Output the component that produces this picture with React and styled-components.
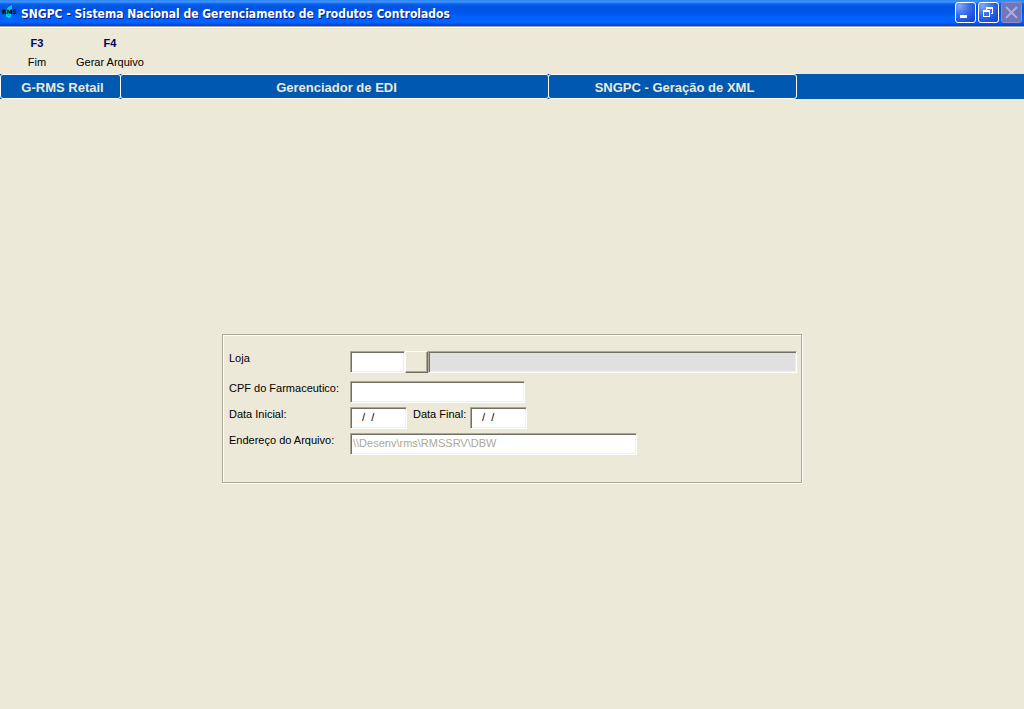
import styled, { createGlobalStyle, css } from 'styled-components'

const GlobalStyle = createGlobalStyle`
    * {
        box-sizing: border-box;
    }

    body {
        margin: 0;
        background-color: #ece9d8;
        color: #000000;
        font-family: 'Liberation Sans', Arial, sans-serif;
        font-size: 11px;
        line-height: 14px;
    }

    button,
    input {
        margin: 0;
        font: inherit;
    }
`

const Window = styled.div`
    display: flex;
    flex-direction: column;
    min-height: 100vh;
`

const TitleBar = styled.header`
    display: flex;
    align-items: center;
    gap: 3px;
    height: 28px;
    padding: 0 2px 2px;
    border-bottom: 1px solid #ffffff;
    background: linear-gradient(
        to bottom,
        #2f86f5 0px,
        #3d95ff 2px,
        #0a5fe8 4px,
        #0054e3 7px,
        #0055e8 12px,
        #0061fb 17px,
        #0066ff 22px,
        #0050ee 24px,
        #003dd7 26px,
        #aca899 26px
    );
`

const Title = styled.h1`
    flex: 1;
    margin: 0;
    padding-top: 2px;
    color: #ffffff;
    font-family: 'DejaVu Sans Condensed', 'DejaVu Sans', sans-serif;
    font-size: 12px;
    font-weight: 700;
    line-height: 18px;
    text-shadow: 1px 1px 0 #0a1883;
    white-space: nowrap;
`

const WindowButtons = styled.div`
    display: flex;
    gap: 2px;
`

const WindowButton = styled.button`
    display: flex;
    width: 21px;
    height: 21px;
    padding: 0;
    border: 1px solid #ffffff;
    border-radius: 3px;
    background: radial-gradient(circle at 20% 15%, #82a8fa 0%, #3a70ea 40%, #1c4fdc 75%, #1241c4 100%);

    &:disabled {
        border-color: #8a8ecb;
        background: #7076b8;
    }
`

const Toolbar = styled.div`
    display: flex;
    gap: 12px;
    height: 46px;
    padding: 7px 4px 0 10px;
`

const ToolButton = styled.button`
    display: flex;
    flex-direction: column;
    align-items: center;
    gap: 5px;
    min-width: 54px;
    height: 34px;
    padding: 1px 0;
    border: 0;
    background: none;
    color: #000000;
    line-height: 14px;
`

const ShortcutKey = styled.strong`
    color: #000066;
`

const Path = styled.nav`
    display: flex;
    height: 25px;
    background-color: #0058b0;
`

const PathItem = styled.a`
    flex: 0 1 ${({ $width }) => $width}px;
    margin-right: -1px;
    padding-left: 4px;
    border: 1px solid #ffffff;
    border-radius: 3px;
    color: #ece9d8;
    font-size: 13px;
    font-weight: 700;
    line-height: 25px;
    text-align: center;
    text-decoration: none;
    white-space: nowrap;
`

const Main = styled.main`
    display: flex;
    flex: 1;
    align-items: center;
    justify-content: center;
    padding-top: 9px;
`

const Panel = styled.form`
    display: flex;
    flex-direction: column;
    gap: 4px;
    width: 100%;
    max-width: 580px;
    padding: 16px 4px 27px 6px;
    border: 1px solid #aca899;
    box-shadow: 1px 1px 0 #ffffff, inset 1px 1px 0 #ffffff;
`

const Row = styled.div`
    display: flex;
    margin-bottom: ${({ $spaced }) => ($spaced ? '4px' : '0')};
`

const Label = styled.label`
    flex: none;
    width: 121px;
`

const InlineLabel = styled.label`
    width: 63px;
    padding-left: 6px;
`

const sunken = css`
    border: 1px solid;
    border-color: #aca899 #ffffff #ffffff #aca899;
    box-shadow: inset 1px 1px 0 #716f64, inset -1px -1px 0 #f1efe2;
`

const Field = styled.input`
    ${sunken}
    flex: ${({ $width }) => ($width ? `0 1 ${$width}px` : '1')};
    min-width: 0;
    height: 22px;
    padding: 0 2px 2px;
    border-radius: 0;
    background-color: #ffffff;
    color: #000000;
    outline: 0;

    &:read-only {
        background-color: #e0e0e0;
    }

    &:disabled {
        background-color: #ffffff;
        color: #aca899;
    }
`

const DateField = styled(Field)`
    padding-left: 11px;
    white-space: pre;
`

const SearchButton = styled.button`
    width: 23px;
    height: 22px;
    padding: 0;
    border: 1px solid;
    border-color: #ffffff #716f64 #716f64 #ffffff;
    background-color: #ece9d8;
    box-shadow: inset -1px -1px 0 #aca899;
`

const Logo = () => (
    <svg width="16" height="18" viewBox="0 0 16 18" aria-hidden="true">
        <path d="M7 2h2V1h1v4H9v2H8v2H7v2H6v2H4v-3H3V8h1V6h1V4h1V3h1z" fill="#00c8e8" />
        <path d="M7 10h2v3H8v1H6v-2h1z" fill="#00d8d8" />
        <text x="0" y="10" fontFamily="DejaVu Sans" fontSize="6" fontWeight="700" fill="#000000">
            RMS
        </text>
    </svg>
)

const MinimizeIcon = () => (
    <svg width="19" height="19" viewBox="0 0 19 19" aria-hidden="true">
        <path d="M4 12h7v3H4z" fill="#ffffff" />
    </svg>
)

const RestoreIcon = () => (
    <svg width="19" height="19" viewBox="0 0 19 19" fill="#ffffff" aria-hidden="true">
        <path d="M7 4h7v7h-2v-1h1V6H8v1H7z" />
        <path fillRule="evenodd" d="M4 7h7v7H4zM5 9v4h5V9z" />
    </svg>
)

const CloseIcon = () => (
    <svg width="19" height="19" viewBox="0 0 19 19" aria-hidden="true">
        <path d="M4 4l11 11M15 4L4 15" stroke="#a9aee0" strokeWidth="2" />
    </svg>
)

const shortcuts = [
    { key: 'F3', label: 'Fim' },
    { key: 'F4', label: 'Gerar Arquivo' },
]

const path = [
    { label: 'G-RMS Retail', width: 121 },
    { label: 'Gerenciador de EDI', width: 429 },
    { label: 'SNGPC - Geração de XML', width: 249 },
]

export default function App() {
    return (
        <Window>
            <GlobalStyle />

            <TitleBar>
                <Logo />
                <Title>SNGPC - Sistema Nacional de Gerenciamento de Produtos Controlados</Title>
                <WindowButtons>
                    <WindowButton type="button" aria-label="Minimizar">
                        <MinimizeIcon />
                    </WindowButton>
                    <WindowButton type="button" aria-label="Restaurar">
                        <RestoreIcon />
                    </WindowButton>
                    <WindowButton type="button" aria-label="Fechar" disabled>
                        <CloseIcon />
                    </WindowButton>
                </WindowButtons>
            </TitleBar>

            <Toolbar>
                {shortcuts.map(({ key, label }) => (
                    <ToolButton key={key} type="button">
                        <ShortcutKey>{key}</ShortcutKey>
                        <span>{label}</span>
                    </ToolButton>
                ))}
            </Toolbar>

            <Path>
                {path.map(({ label, width }) => (
                    <PathItem key={label} href="#" $width={width}>
                        {label}
                    </PathItem>
                ))}
            </Path>

            <Main>
                <Panel>
                    <Row $spaced>
                        <Label htmlFor="loja">Loja</Label>
                        <Field id="loja" type="text" $width={55} />
                        <SearchButton type="button" aria-label="Pesquisar loja" />
                        <Field type="text" aria-label="Nome da loja" readOnly />
                    </Row>

                    <Row>
                        <Label htmlFor="cpf">CPF do Farmaceutico:</Label>
                        <Field id="cpf" type="text" $width={175} />
                    </Row>

                    <Row>
                        <Label htmlFor="dataInicial">Data Inicial:</Label>
                        <DateField id="dataInicial" type="text" defaultValue="/  /" $width={57} />
                        <InlineLabel htmlFor="dataFinal">Data Final:</InlineLabel>
                        <DateField id="dataFinal" type="text" defaultValue="/  /" $width={57} />
                    </Row>

                    <Row>
                        <Label htmlFor="endereco">Endereço do Arquivo:</Label>
                        <Field
                            id="endereco"
                            type="text"
                            defaultValue={'\\\\Desenv\\rms\\RMSSRV\\DBW'}
                            $width={287}
                            disabled
                        />
                    </Row>
                </Panel>
            </Main>
        </Window>
    )
}
